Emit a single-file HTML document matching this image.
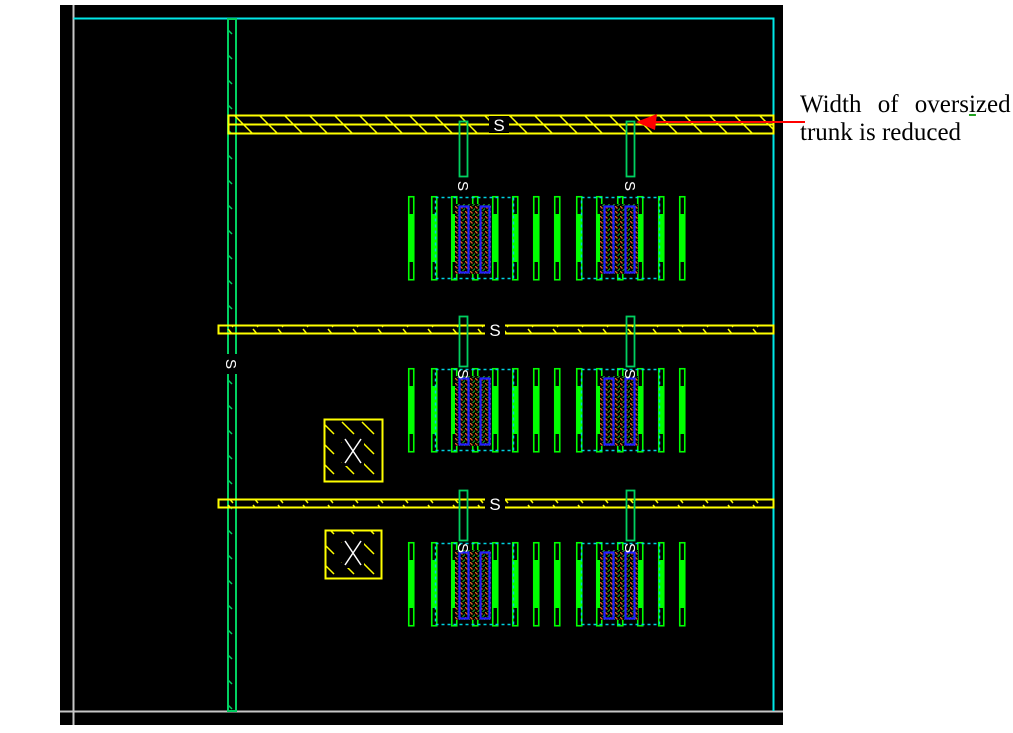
<!DOCTYPE html>
<html><head><style>
html,body{margin:0;padding:0;background:#fff;width:1013px;height:733px;overflow:hidden}
svg{position:absolute;left:0;top:0}
.t{position:absolute;left:800px;font-family:"Liberation Serif",serif;font-size:25px;line-height:28px;color:#000;white-space:nowrap}
</style></head><body>
<svg width="1013" height="733" viewBox="0 0 1013 733">
<defs>
<pattern id="hy" width="25" height="18" patternUnits="userSpaceOnUse" x="228" y="115"><path d="M6 0 L15 9 M15 9 L24 18" stroke="#ffff00" stroke-width="1.5"/></pattern>
<pattern id="hy2" width="25" height="8" patternUnits="userSpaceOnUse"><path d="M3 1 L8 7" stroke="#ffff00" stroke-width="1.5"/></pattern>
<pattern id="hg" width="9" height="25" patternUnits="userSpaceOnUse"><path d="M2 4 L7 9" stroke="#00d060" stroke-width="1.5"/></pattern>
<pattern id="ho" width="5" height="5" patternUnits="userSpaceOnUse"><rect width="5" height="5" fill="#000"/><path d="M0 0 L2.5 2.5" stroke="#e06020" stroke-width="1.3"/><path d="M2.5 5 L5 2.5" stroke="#20b020" stroke-width="1"/></pattern>
<pattern id="hx" width="20" height="20" patternUnits="userSpaceOnUse"><path d="M2 2 L14 14" stroke="#ffff00" stroke-width="1.5"/></pattern>
<g id="bar"><rect x="0.75" y="0.75" width="5" height="83" fill="none" stroke="#00ff00" stroke-width="1.6"/><rect x="1" y="18" width="4.5" height="48" fill="#00ff00"/></g>
<g id="cell">
<use href="#bar" x="408"/><use href="#bar" x="431"/><use href="#bar" x="451"/><use href="#bar" x="472"/><use href="#bar" x="492"/><use href="#bar" x="512"/>
<rect x="455" y="8" width="36" height="70" fill="url(#ho)"/>
<rect x="459.5" y="10.5" width="9" height="66" fill="none" stroke="#2020ff" stroke-width="2.2"/>
<rect x="480.5" y="10.5" width="9" height="66" fill="none" stroke="#2020ff" stroke-width="2.2"/>
<rect x="435.5" y="1.5" width="78" height="81" fill="none" stroke="#00d0e0" stroke-width="1.5" stroke-dasharray="3,3"/>
<use href="#bar" x="533"/><use href="#bar" x="554"/><use href="#bar" x="576"/><use href="#bar" x="596"/><use href="#bar" x="617"/><use href="#bar" x="637"/><use href="#bar" x="658"/><use href="#bar" x="679"/>
<rect x="600" y="8" width="38" height="70" fill="url(#ho)"/>
<rect x="604.5" y="10.5" width="9" height="66" fill="none" stroke="#2020ff" stroke-width="2.2"/>
<rect x="625.5" y="10.5" width="9" height="66" fill="none" stroke="#2020ff" stroke-width="2.2"/>
<rect x="581.5" y="1.5" width="78" height="81" fill="none" stroke="#00d0e0" stroke-width="1.5" stroke-dasharray="3,3"/>
</g>
</defs>
<rect x="60" y="5" width="723" height="720" fill="#000"/>
<line x1="73.5" y1="5" x2="73.5" y2="725" stroke="#c8c8c8" stroke-width="2"/>
<line x1="60" y1="711.5" x2="783" y2="711.5" stroke="#c8c8c8" stroke-width="2"/>
<path d="M73.5 18.5 H773.5 V711" fill="none" stroke="#00e8e8" stroke-width="2"/>
<rect x="228" y="19" width="8" height="692" fill="url(#hg)"/>
<rect x="228" y="19" width="8" height="692" fill="none" stroke="#00d060" stroke-width="2"/>
<rect x="222" y="354" width="18" height="20" fill="#000"/>
<text fill="#fff" font-family="Liberation Sans,sans-serif" font-size="15" text-anchor="middle" transform="translate(231,364) rotate(90)" y="5">S</text>
<rect x="228" y="115" width="545" height="18" fill="url(#hy)"/>
<path d="M228.5 115.5 H773.5 V133.5 H228.5 Z M228.5 124.5 H773.5" fill="none" stroke="#ffff00" stroke-width="2"/>
<rect x="218" y="325" width="555" height="8" fill="url(#hy2)"/>
<rect x="218.5" y="325.5" width="555" height="8" fill="none" stroke="#ffff00" stroke-width="2"/>
<rect x="218" y="499" width="555" height="8" fill="url(#hy2)"/>
<rect x="218.5" y="499.5" width="555" height="8" fill="none" stroke="#ffff00" stroke-width="2"/>
<use href="#cell" y="196"/><use href="#cell" y="368"/><use href="#cell" y="542"/>
<g fill="none" stroke="#00d060" stroke-width="1.8">
<rect x="459.5" y="121.5" width="8" height="55"/><rect x="626.5" y="121.5" width="8" height="55"/>
<rect x="459.5" y="316.5" width="8" height="50"/><rect x="626.5" y="316.5" width="8" height="50"/>
<rect x="459.5" y="490.5" width="8" height="50"/><rect x="626.5" y="490.5" width="8" height="50"/>
</g>
<g fill="#fff" font-family="Liberation Sans,sans-serif" font-size="17" text-anchor="middle">
<rect x="489" y="116" width="20" height="17" fill="#000"/><text x="499" y="131">S</text>
<rect x="485" y="321" width="20" height="16" fill="#000"/><text x="495" y="336">S</text>
<rect x="485" y="495" width="20" height="16" fill="#000"/><text x="495" y="510">S</text>
</g>
<g fill="#fff" font-family="Liberation Sans,sans-serif" font-size="15" text-anchor="middle">
<text transform="translate(463,186) rotate(90)" y="5">S</text>
<text transform="translate(630,186) rotate(90)" y="5">S</text>
<text transform="translate(463,374) rotate(90)" y="5">S</text>
<text transform="translate(630,374) rotate(90)" y="5">S</text>
<text transform="translate(463,548) rotate(90)" y="5">S</text>
<text transform="translate(630,548) rotate(90)" y="5">S</text>
</g>
<rect x="324.5" y="419.5" width="58" height="62" fill="url(#hx)" stroke="#ffff00" stroke-width="2"/>
<rect x="325.5" y="530.5" width="56" height="48" fill="url(#hx)" stroke="#ffff00" stroke-width="2"/>
<rect x="342" y="436" width="22" height="30" fill="#000"/>
<rect x="342" y="540" width="22" height="28" fill="#000"/>
<g stroke="#fff" stroke-width="1.5"><path d="M345 439 L361 463 M361 439 L345 463"/><path d="M345 541 L361 565 M361 541 L345 565"/></g>
<line x1="650" y1="122" x2="805" y2="122" stroke="#ff0000" stroke-width="2"/>
<polygon points="636,122 657,114 655,130" fill="#ff0000"/>
</svg>
<div class="t" style="top:91px;word-spacing:10px">Width of overs<span style="text-decoration:underline;text-decoration-color:#20a020">i</span>zed</div>
<div class="t" style="top:119px">trunk is reduced</div>
</body></html>
